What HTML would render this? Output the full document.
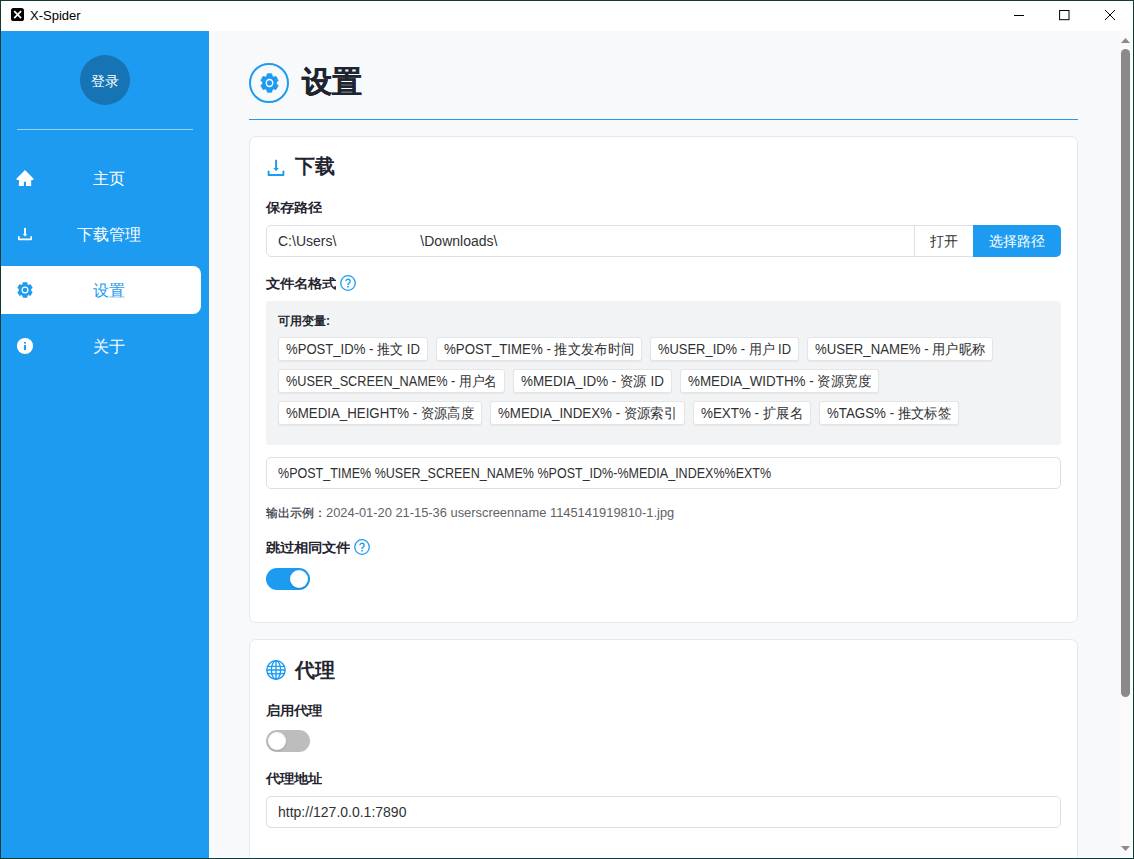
<!DOCTYPE html>
<html><head><meta charset="utf-8">
<style>
*{margin:0;padding:0;box-sizing:border-box}
html,body{width:1134px;height:859px;overflow:hidden;background:#0f3a36;font-family:"Liberation Sans",sans-serif}
.abs{position:absolute}
#win{position:absolute;left:1px;top:1px;width:1132px;height:857px;background:#fff;overflow:hidden}
#title{position:absolute;left:0;top:0;width:1132px;height:30px;background:#fff}
#side{position:absolute;left:0;top:30px;width:208px;height:827px;background:#1d9bf0}
#content{position:absolute;left:208px;top:30px;width:909px;height:826px;background:#f8f9fb}
#sb{position:absolute;left:1117px;top:30px;width:14px;height:826px;background:#fafafa}
.nav{position:absolute;left:0;width:200px;height:48px;color:#fff;font-size:16px}
.nav .t{position:absolute;left:0;width:216px;text-align:center;top:1px;line-height:48px}
.nav svg{position:absolute;left:9px;top:9px}
.nav.active{background:#fff;color:#1d9bf0;border-radius:0 8px 8px 0}
.card{position:absolute;left:248px;width:829px;background:#fff;border:1px solid #e6e8eb;border-radius:7px}
.lbl{position:absolute;font-size:14px;font-weight:bold;color:#1f2530;line-height:16px;margin-top:-1px;transform:scaleY(0.9);transform-origin:0 55%}
.h2{position:absolute;font-size:20px;font-weight:bold;color:#1f2530;line-height:22px;margin-top:-1px}
.inp{position:absolute;left:265px;width:795px;height:32px;background:#fff;border:1px solid #dcdfe3;border-radius:5px;font-size:14px;color:#303133;line-height:30px;padding-left:11px;white-space:nowrap}
.chip{position:absolute;height:24px;background:#fff;border:1px solid #e3e5e8;border-radius:3px;box-shadow:0 1px 1px rgba(0,0,0,0.05);font-size:14px;color:#303133;line-height:22px;white-space:nowrap}
.chip span{position:absolute;left:7px;top:0;transform-origin:0 50%}
.help{position:absolute;width:16px;height:16px}
</style></head><body>
<div id="win">
  <div id="title">
    <div class="abs" style="left:9.6px;top:7.1px;width:13.3px;height:13.4px;background:#000;border-radius:2.6px"></div>
    <svg class="abs" style="left:9.6px;top:7.1px" width="13.3" height="13.4" viewBox="0 0 13.3 13.4"><path d="M3.2 3.2L10.1 10.2M10.1 3.2L3.2 10.2" stroke="#fff" stroke-width="1.7"/></svg>
    <div class="abs" style="left:29px;top:7px;font-size:13px;line-height:16px;color:#000">X-Spider</div>
    <svg class="abs" style="left:1000px;top:0" width="132" height="30" viewBox="0 0 132 30">
      <path d="M13 14.5H23" stroke="#000" stroke-width="1"/>
      <rect x="58.6" y="9.5" width="9.4" height="9.2" fill="none" stroke="#000" stroke-width="1"/>
      <path d="M104 9L114 19M114 9L104 19" stroke="#000" stroke-width="1"/>
    </svg>
  </div>
  <div id="side">
    <div class="abs" style="left:79px;top:24px;width:50px;height:50px;border-radius:50%;background:#1674b4;color:#fff;font-size:14px;text-align:center;line-height:52px">登录</div>
    <div class="abs" style="left:16px;top:98px;width:176px;height:1px;background:rgba(255,255,255,0.55)"></div>
    <div class="nav" style="top:123px"><svg style="top:11px" width="30" height="30" viewBox="0 0 30 30"><path d="M15 4.9L6.6 13.6V14.9H8.9V21H14V16.8H16V21H21.2V14.9H23.4V13.6Z" fill="#fff"/></svg><div class="t">主页</div></div>
    <div class="nav" style="top:179px"><svg style="top:10px" width="30" height="30" viewBox="0 0 30 30"><g fill="#fff"><rect x="14.05" y="7.9" width="1.9" height="6.5"/><path d="M12.8 14H17.2L15 16.4Z"/></g><path d="M8.8 16.7V19.3H21.2V16.7" stroke="#fff" stroke-width="1.65" fill="none" stroke-linecap="round" stroke-linejoin="round"/></svg><div class="t">下载管理</div></div>
    <div class="nav active" style="top:235px"><svg width="30" height="30" viewBox="0 0 30 30"><svg x="7" y="6.8" width="16" height="16.4" viewBox="0 0 20 20" preserveAspectRatio="none"><path d="M7.10 3.19 L7.70 0.78 L12.30 0.78 L12.90 3.19 L14.45 4.08 L16.83 3.40 L19.13 7.38 L17.35 9.11 L17.35 10.89 L19.13 12.62 L16.83 16.60 L14.45 15.92 L12.90 16.81 L12.30 19.22 L7.70 19.22 L7.10 16.81 L5.55 15.92 L3.17 16.60 L0.87 12.62 L2.65 10.89 L2.65 9.11 L0.87 7.38 L3.17 3.40 L5.55 4.08Z" fill="#1d9bf0" stroke="#1d9bf0" stroke-width="0.8" stroke-linejoin="round"/><circle cx="10" cy="10" r="3.6" fill="none" stroke="#fff" stroke-width="1.5"/></svg></svg><div class="t">设置</div></div>
    <div class="nav" style="top:291px"><svg width="30" height="30" viewBox="0 0 30 30"><circle cx="15" cy="15" r="8.1" fill="#fff"/><rect x="14" y="11.1" width="2" height="1.5" fill="#1d9bf0"/><rect x="14" y="14.1" width="2" height="4.9" fill="#1d9bf0"/></svg><div class="t">关于</div></div>
  </div>
  <div id="content"></div>
  <div id="sb">
    <svg class="abs" style="left:0;top:0" width="14" height="826" viewBox="0 0 14 826">
      <path d="M3 12H12L7.5 7Z" fill="#8a8a8a"/>
      <rect x="3" y="18" width="9" height="648" rx="4.5" fill="#8a8a8a"/>
      <path d="M3 815H12L7.5 820Z" fill="#8a8a8a"/>
    </svg>
  </div>

  <!-- header -->
  <div class="abs" style="left:248px;top:62px;width:40px;height:40px;border-radius:50%;border:2px solid #1d9bf0"></div>
  <svg class="abs" style="left:258.6px;top:72px" width="19" height="20" viewBox="0 0 20 20" preserveAspectRatio="none"><path d="M7.10 3.19 L7.70 0.78 L12.30 0.78 L12.90 3.19 L14.45 4.08 L16.83 3.40 L19.13 7.38 L17.35 9.11 L17.35 10.89 L19.13 12.62 L16.83 16.60 L14.45 15.92 L12.90 16.81 L12.30 19.22 L7.70 19.22 L7.10 16.81 L5.55 15.92 L3.17 16.60 L0.87 12.62 L2.65 10.89 L2.65 9.11 L0.87 7.38 L3.17 3.40 L5.55 4.08Z" fill="#1d9bf0" stroke="#1d9bf0" stroke-width="0.8" stroke-linejoin="round"/><circle cx="10" cy="10" r="3.4" fill="none" stroke="#fff" stroke-width="1.5"/></svg>
  <div class="abs" style="left:301px;top:63px;font-size:30px;font-weight:bold;color:#1f2530;line-height:36px;-webkit-text-stroke:0.3px #1f2530">设置</div>
  <div class="abs" style="left:248px;top:118px;width:829px;height:1px;background:#1d9bf0"></div>

  <!-- card 1 -->
  <div class="card" style="top:135px;height:487px"></div>
  <svg class="abs" style="left:261px;top:153px" width="30" height="30" viewBox="0 0 30 30"><g fill="#1d9bf0"><rect x="13.1" y="5.8" width="1.95" height="8.6"/><path d="M11.4 14H16.8L14.1 17.2Z"/></g><path d="M6.6 17.4V20.9H21.4V17.4" stroke="#1d9bf0" stroke-width="1.95" fill="none" stroke-linecap="round" stroke-linejoin="round"/></svg>
  <div class="h2" style="left:294px;top:155px">下载</div>
  <div class="lbl" style="left:265px;top:199px">保存路径</div>
  <div class="inp" style="top:224px;width:650px;border-radius:5px 0 0 5px">C:\Users\<span style="display:inline-block;width:84px"></span>\Downloads\</div>
  <div class="abs" style="left:913px;top:224px;width:60px;height:32px;border:1px solid #dcdfe3;background:#fff;font-size:14px;color:#303133;text-align:center;line-height:30px">打开</div>
  <div class="abs" style="left:972px;top:224px;width:88px;height:32px;background:#1d9bf0;border-radius:0 5px 5px 0;font-size:14px;color:#fff;text-align:center;line-height:32px">选择路径</div>
  <div class="lbl" style="left:265px;top:275px">文件名格式</div>
  <svg class="help" style="left:339px;top:274px" viewBox="0 0 16 16"><circle cx="8" cy="8" r="7.3" fill="none" stroke="#1d9bf0" stroke-width="1.3"/><path d="M5.9 6.3a2.1 2.1 0 1 1 3.2 1.8c-0.7 0.4-1.1 0.8-1.1 1.6v0.3" stroke="#1d9bf0" stroke-width="1.4" fill="none"/><rect x="7.2" y="10.9" width="1.6" height="1.6" fill="#1d9bf0"/></svg>

  <div class="abs" style="left:265px;top:300px;width:795px;height:144px;background:#f2f3f5;border-radius:3px"></div>
  <div class="abs" style="left:277px;top:312px;font-size:12px;font-weight:bold;color:#1f2530;line-height:16px">可用变量:</div>
  <div class="chip" style="left:277px;top:336px;width:150px"><span style="transform:scaleX(0.936)">%POST_ID% - 推文 ID</span></div>
  <div class="chip" style="left:435px;top:336px;width:206px"><span style="transform:scaleX(0.947)">%POST_TIME% - 推文发布时间</span></div>
  <div class="chip" style="left:649px;top:336px;width:149px"><span style="transform:scaleX(0.924)">%USER_ID% - 用户 ID</span></div>
  <div class="chip" style="left:806px;top:336px;width:186px"><span style="transform:scaleX(0.942)">%USER_NAME% - 用户昵称</span></div>
  <div class="chip" style="left:277px;top:368px;width:227px"><span style="transform:scaleX(0.907)">%USER_SCREEN_NAME% - 用户名</span></div>
  <div class="chip" style="left:512px;top:368px;width:159px"><span style="transform:scaleX(0.957)">%MEDIA_ID% - 资源 ID</span></div>
  <div class="chip" style="left:679px;top:368px;width:199px"><span style="transform:scaleX(0.956)">%MEDIA_WIDTH% - 资源宽度</span></div>
  <div class="chip" style="left:277px;top:400px;width:204px"><span style="transform:scaleX(0.948)">%MEDIA_HEIGHT% - 资源高度</span></div>
  <div class="chip" style="left:489px;top:400px;width:195px"><span style="transform:scaleX(0.951)">%MEDIA_INDEX% - 资源索引</span></div>
  <div class="chip" style="left:692px;top:400px;width:118px"><span style="transform:scaleX(0.957)">%EXT% - 扩展名</span></div>
  <div class="chip" style="left:818px;top:400px;width:140px"><span style="transform:scaleX(0.951)">%TAGS% - 推文标签</span></div>

  <div class="inp" style="top:456px"><span style="display:inline-block;transform:scaleX(0.894);transform-origin:0 50%">%POST_TIME% %USER_SCREEN_NAME% %POST_ID%-%MEDIA_INDEX%%EXT%</span></div>
  <div class="abs" style="left:265px;top:504px;font-size:12px;color:#303540;line-height:16px;-webkit-text-stroke:0.2px #303540">输出示例：</div>
  <div class="abs" style="left:325.3px;top:504px;font-size:13px;color:#5f6368;line-height:16px"><span style="display:inline-block;transform:scaleX(0.99);transform-origin:0 50%">2024-01-20 21-15-36 userscreenname 1145141919810-1.jpg</span></div>
  <div class="lbl" style="left:265px;top:539px">跳过相同文件</div>
  <svg class="help" style="left:353px;top:538px" viewBox="0 0 16 16"><circle cx="8" cy="8" r="7.3" fill="none" stroke="#1d9bf0" stroke-width="1.3"/><path d="M5.9 6.3a2.1 2.1 0 1 1 3.2 1.8c-0.7 0.4-1.1 0.8-1.1 1.6v0.3" stroke="#1d9bf0" stroke-width="1.4" fill="none"/><rect x="7.2" y="10.9" width="1.6" height="1.6" fill="#1d9bf0"/></svg>
  <div class="abs" style="left:265px;top:567px;width:44px;height:22px;border-radius:11px;background:#1d9bf0"></div>
  <div class="abs" style="left:289px;top:569px;width:18px;height:18px;border-radius:50%;background:#fff;box-shadow:0 1px 2px rgba(0,0,0,0.15)"></div>

  <!-- card 2 -->
  <div class="card" style="top:638px;height:260px"></div>
  <svg class="abs" style="left:265px;top:659px" width="20" height="20" viewBox="0 0 20 20"><g stroke="#1d9bf0" stroke-width="1.4" fill="none"><circle cx="10" cy="10" r="9.2"/><ellipse cx="10" cy="10" rx="4.6" ry="9.2"/><path d="M10 0.8V19.2M0.8 10H19.2M1.8 6.6Q10 5.6 18.2 6.6M1.8 13.4Q10 14.4 18.2 13.4"/></g></svg>
  <div class="h2" style="left:294px;top:659px">代理</div>
  <div class="lbl" style="left:265px;top:702px">启用代理</div>
  <div class="abs" style="left:265px;top:729px;width:44px;height:22px;border-radius:11px;background:#bdbdbd"></div>
  <div class="abs" style="left:267px;top:731px;width:18px;height:18px;border-radius:50%;background:#fff;box-shadow:0 1px 2px rgba(0,0,0,0.15)"></div>
  <div class="lbl" style="left:265px;top:770px">代理地址</div>
  <div class="inp" style="top:795px">http://127.0.0.1:7890</div>
</div>
</body></html>
